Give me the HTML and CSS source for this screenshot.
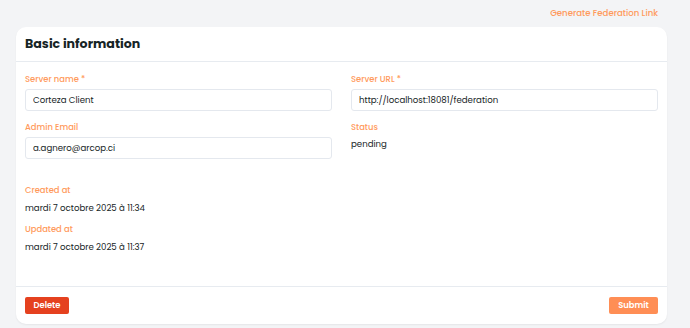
FILE: index.html
```html
<!DOCTYPE html>
<html lang="fr">
<head>
<meta charset="utf-8">
<title>Federation</title>
<link rel="stylesheet" href="styles.css">
</head>
<body>
<div class="topbar">
  <a class="gen-link" href="#">Generate Federation Link</a>
</div>
<div class="card">
  <div class="card-header">
    <h2 class="card-title">Basic information</h2>
  </div>
  <div class="card-body">
    <div class="grid">
      <div class="field">
        <label class="label">Server name *</label>
        <input class="input" type="text" value="Corteza Client">
      </div>
      <div class="field">
        <label class="label">Server URL *</label>
        <input class="input" type="text" value="http://localhost:18081/federation">
      </div>
      <div class="field">
        <label class="label">Admin Email</label>
        <input class="input" type="text" value="a.agnero@arcop.ci">
      </div>
      <div class="field">
        <label class="label">Status</label>
        <div class="value">pending</div>
      </div>
    </div>
    <div class="meta">
      <div class="field">
        <label class="label label-meta">Created at</label>
        <div class="value">mardi 7 octobre 2025 à 11:34</div>
      </div>
      <div class="field">
        <label class="label label-meta">Updated at</label>
        <div class="value">mardi 7 octobre 2025 à 11:37</div>
      </div>
    </div>
  </div>
  <div class="card-footer">
    <button class="btn btn-danger">Delete</button>
    <button class="btn btn-primary">Submit</button>
  </div>
</div>
</body>
</html>
```
FILE: styles.css
```css
* { box-sizing: border-box; }
body {
  margin: 0;
  background: #f3f4f6;
  font-family: "Poppins", "Inter", "Noto Sans", sans-serif;
  color: #162425;
  width: 690px;
  height: 328px;
  overflow: hidden;
}
.topbar {
  height: 27px;
  display: flex;
  justify-content: flex-end;
  align-items: center;
  padding-right: 32px;
}
.gen-link {
  font-size: 8.6px;
  font-weight: 500;
  color: #ff9a5c;
  text-decoration: none;
}
.card {
  margin: 0 23px 0 16px;
  background: #fff;
  border-radius: 10px;
  box-shadow: 0 1px 2px rgba(0,0,0,0.06);
}
.card-header {
  height: 35px;
  display: flex;
  align-items: center;
  padding: 0 9px;
  border-bottom: 1px solid #e7ebf0;
}
.card-title {
  margin: 0;
  font-size: 12.6px;
  font-weight: 700;
  color: #162425;
}
.card-body {
  padding: 10px 9px 32px;
}
.grid {
  display: grid;
  grid-template-columns: 307px 307px;
  column-gap: 19px;
  row-gap: 9px;
}
.field {
  display: flex;
  flex-direction: column;
}
.label {
  font-size: 8.4px;
  line-height: 14px;
  font-weight: 500;
  color: #ff9a5c;
  margin-bottom: 3px;
}
.label-meta {
  margin-bottom: 4px;
}
.input {
  height: 22px;
  border: 1.5px solid #e4e8ee;
  border-radius: 3px;
  padding: 0 7px;
  font-family: inherit;
  font-size: 8.6px;
  color: #162425;
  outline: none;
}
.value {
  font-size: 8.6px;
  line-height: 14px;
  color: #162425;
}
.meta {
  margin-top: 24px;
  display: flex;
  flex-direction: column;
  gap: 7px;
}
.card-footer {
  border-top: 1px solid #e7ebf0;
  display: flex;
  justify-content: space-between;
  align-items: center;
  padding: 10px 9px 10px;
}
.btn {
  height: 17px;
  border: none;
  border-radius: 2px;
  font-family: inherit;
  font-size: 8.4px;
  font-weight: 600;
  color: #fff;
  padding: 0;
}
.btn-danger {
  background: #e5411f;
  width: 44px;
}
.btn-primary {
  background: #ff8e55;
  width: 49px;
}
```
